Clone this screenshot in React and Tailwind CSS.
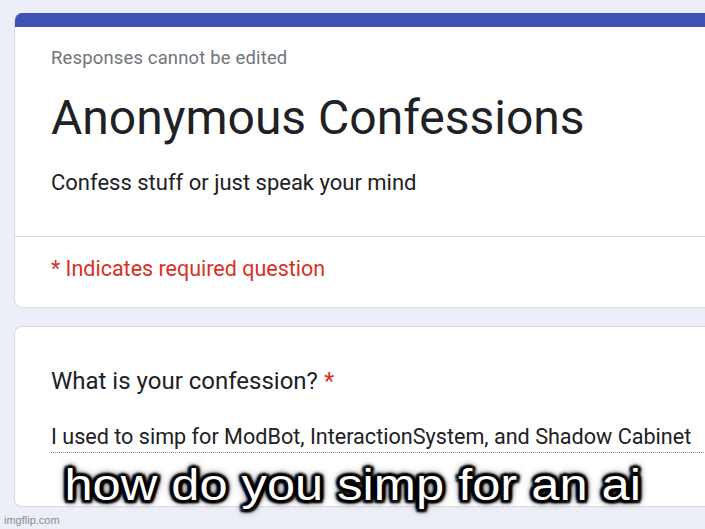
// App.jsx — Google Forms confession screenshot with meme caption

export default function App() {
  return (
    <div
      className="relative w-[705px] h-[529px] overflow-hidden bg-[#eceef8]"
      style={{ fontFamily: 'Roboto, "Liberation Sans", sans-serif' }}
    >
      <div className="pl-[14px] pt-[13px] flex flex-col gap-[18px]">
        {/* Header card */}
        <div className="w-[720px] bg-white rounded-l-lg border-l border-b border-[#dadce0] overflow-hidden">
          <div className="h-[14px] bg-[#3f51b5]" />
          <div className="pl-[36px] pt-[19px] pb-[39px]">
            <div className="text-[18.4px] leading-[24px] text-[#70757a] tracking-[0.2px]">
              Responses cannot be edited
            </div>
            <div className="mt-[20px] text-[48px] leading-[56px] text-[#202124]">
              Anonymous Confessions
            </div>
            <div className="mt-[23px] text-[22px] leading-[28px] text-[#202124]">
              Confess stuff or just speak your mind
            </div>
          </div>
          <div className="border-t border-[#dadce0] pl-[36px] pt-[18px] pb-[24px]">
            <div className="text-[21.5px] leading-[28px] text-[#d93025]">
              * Indicates required question
            </div>
          </div>
        </div>

        {/* Question card */}
        <div className="w-[720px] h-[181px] bg-white rounded-l-lg border-l border-t border-b border-[#dadce0] pl-[36px] pt-[38px]">
          <div className="text-[24px] leading-[32px] text-[#202124]">
            What is your confession? <span className="text-[#d93025]">*</span>
          </div>
          <div className="mt-[25px] text-[21.6px] leading-[30px] text-[#202124] border-b border-dotted border-[#80868b]">
            I used to simp for ModBot, InteractionSystem, and Shadow Cabinet
          </div>
        </div>
      </div>

      {/* Meme caption */}
      <div className="absolute left-0 right-0 top-[459px] flex justify-center">
        <div
          className="inline-block scale-x-[1.15] text-white text-[44px] leading-[52px] whitespace-nowrap"
          style={{
            fontFamily: '"Liberation Sans", Arial, sans-serif',
            textShadow:
              '2.5px 2.5px 2px #000, -2.5px -2.5px 2px #000, 2.5px -2.5px 2px #000, -2.5px 2.5px 2px #000, 0 3px 2px #000, 0 -3px 2px #000, 3px 0 2px #000, -3px 0 2px #000, 0 0 6px #000, 0 0 9px #000',
          }}
        >
          how do you simp for an ai
        </div>
      </div>

      {/* Watermark */}
      <div
        className="absolute left-[4px] bottom-[2px] text-[11px] leading-[14px] text-[#8b8d94]"
        style={{ fontFamily: '"Liberation Sans", Arial, sans-serif' }}
      >
        imgflip.com
      </div>
    </div>
  );
}
